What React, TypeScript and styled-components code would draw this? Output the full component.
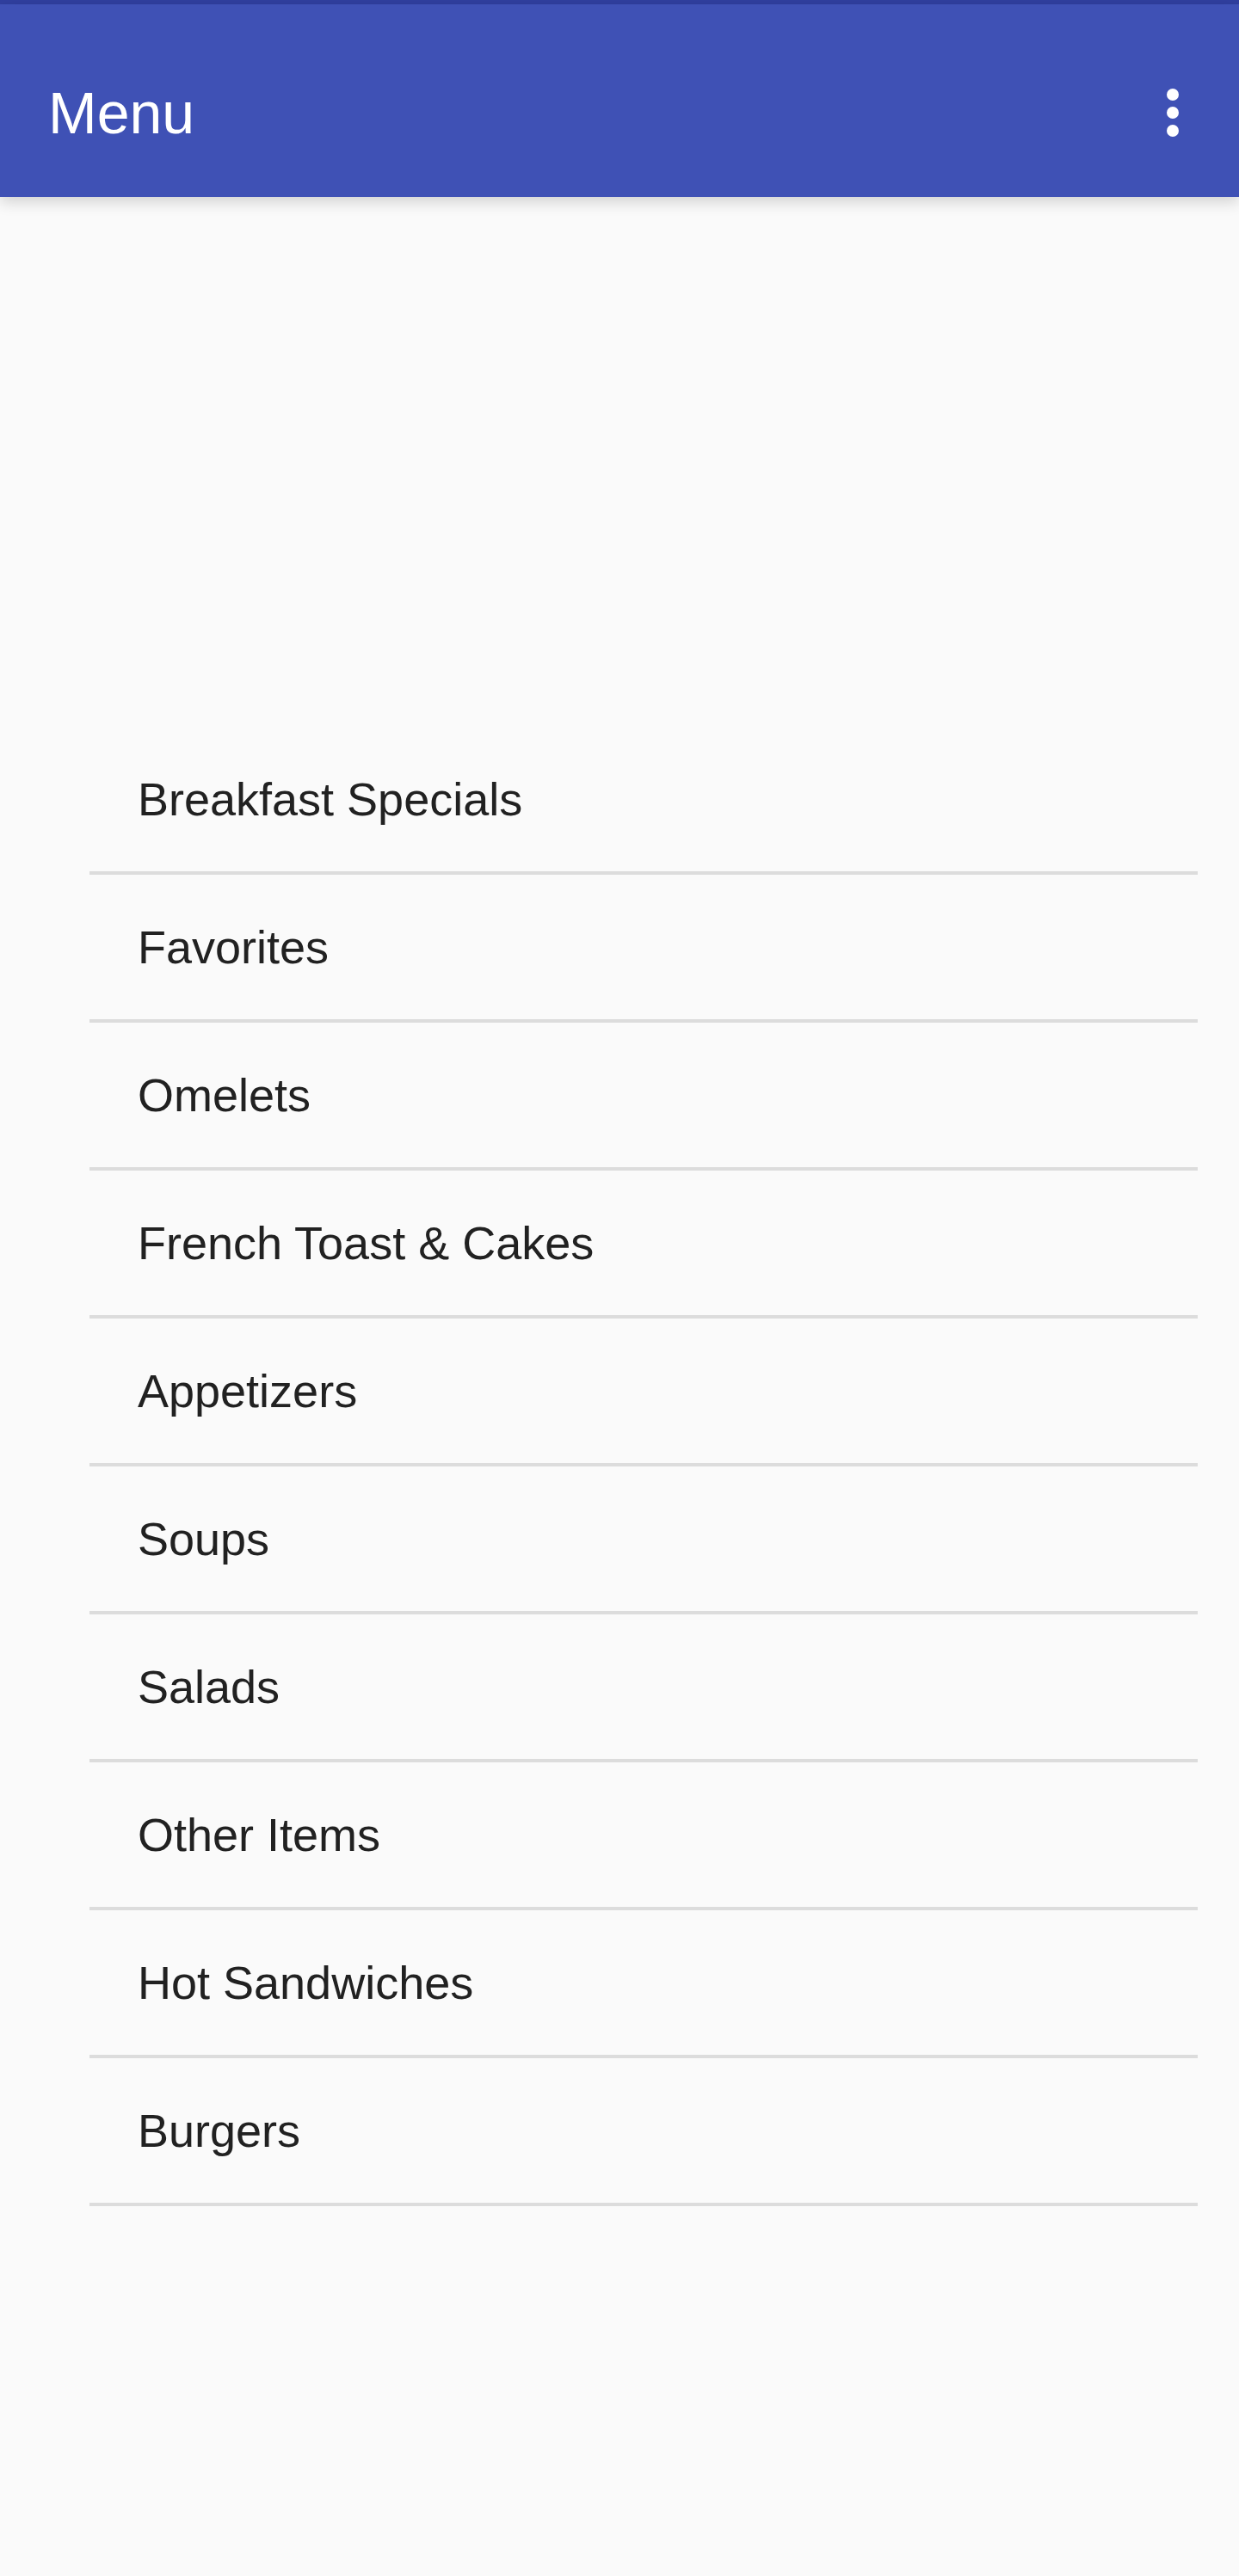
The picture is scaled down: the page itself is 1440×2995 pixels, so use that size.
import React from "react";
import styled, { createGlobalStyle } from "styled-components";

const GlobalStyle = createGlobalStyle`
  body {
    margin: 0;
    background: #fafafa;
    color: #212121;
    font-family: "Liberation Sans", Arial, sans-serif;
  }
`;

const StatusStrip = styled.div`
  height: 5px;
  background: #303f9f;
`;

const AppBar = styled.header`
  display: flex;
  align-items: center;
  justify-content: space-between;
  height: 196px;
  padding: 28px 35px 0 56px;
  background: #3f51b5;
  color: #fff;
  box-shadow: 0 6px 16px rgba(0, 0, 0, 0.16);
`;

const Title = styled.h1`
  margin: 0;
  font-size: 68px;
  line-height: 84px;
  font-weight: 400;
`;

const OverflowButton = styled.button`
  display: flex;
  padding: 0;
  border: 0;
  background: none;
  color: inherit;
  cursor: pointer;
`;

const Content = styled.main`
  padding: 616px 48px 0 104px;
`;

const MenuList = styled.ul`
  margin: 0;
  padding: 0;
  list-style: none;
`;

const MenuItem = styled.li`
  border-bottom: 4px solid #dcdcdc;
`;

const MenuLink = styled.a`
  display: block;
  padding: 48px 56px;
  font-size: 54px;
  line-height: 72px;
  color: inherit;
  text-decoration: none;
`;

const categories = [
  "Breakfast Specials",
  "Favorites",
  "Omelets",
  "French Toast & Cakes",
  "Appetizers",
  "Soups",
  "Salads",
  "Other Items",
  "Hot Sandwiches",
  "Burgers",
];

export default function App() {
  return (
    <>
      <GlobalStyle />
      <StatusStrip />
      <AppBar>
        <Title>Menu</Title>
        <OverflowButton type="button" aria-label="More options">
          <svg width="84" height="84" viewBox="0 0 24 24" fill="currentColor" aria-hidden="true">
            <circle cx="12" cy="6" r="2" />
            <circle cx="12" cy="12" r="2" />
            <circle cx="12" cy="18" r="2" />
          </svg>
        </OverflowButton>
      </AppBar>
      <Content>
        <MenuList>
          {categories.map((name) => (
            <MenuItem key={name}>
              <MenuLink href="#">{name}</MenuLink>
            </MenuItem>
          ))}
        </MenuList>
      </Content>
    </>
  );
}
